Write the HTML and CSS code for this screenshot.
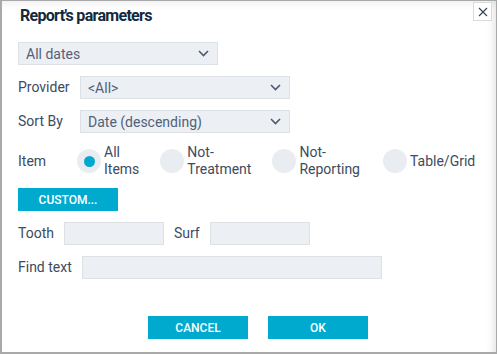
FILE: index.html
```html
<!DOCTYPE html>
<html lang="en">
<head>
  <meta charset="UTF-8" />
  <title>Report's parameters</title>
  <link rel="stylesheet" href="styles.css">
</head>
<body>

<div class="dialog">
  <div class="dialog-header">
    <div class="dialog-title">Report's parameters</div>
    <button class="close-btn" aria-label="Close">
      <svg width="10" height="10" viewBox="0 0 10 10">
        <path d="M1 1 L9 9 M9 1 L1 9" stroke="#34424f" stroke-width="1.1" fill="none"/>
      </svg>
    </button>
  </div>

  <div class="dialog-body">
    <div class="select select-dates">
      <span>All dates</span>
      <svg class="chevron" width="11" height="7" viewBox="0 0 11 7"><path d="M1 1 L5.5 5.5 L10 1" stroke="#4b5a70" stroke-width="1.6" fill="none"/></svg>
    </div>

    <div class="row">
      <span class="label label-wide">Provider</span>
      <div class="select select-long">
        <span>&lt;All&gt;</span>
        <svg class="chevron" width="11" height="7" viewBox="0 0 11 7"><path d="M1 1 L5.5 5.5 L10 1" stroke="#4b5a70" stroke-width="1.6" fill="none"/></svg>
      </div>
    </div>

    <div class="row">
      <span class="label label-wide">Sort By</span>
      <div class="select select-long">
        <span>Date (descending)</span>
        <svg class="chevron" width="11" height="7" viewBox="0 0 11 7"><path d="M1 1 L5.5 5.5 L10 1" stroke="#4b5a70" stroke-width="1.6" fill="none"/></svg>
      </div>
    </div>

    <div class="row row-radios">
      <span class="label label-item">Item</span>
      <div class="radio-group">
        <label class="radio checked"><span class="radio-circle"></span><span class="radio-text">All<br>Items</span></label>
        <label class="radio"><span class="radio-circle"></span><span class="radio-text">Not-<br>Treatment</span></label>
        <label class="radio"><span class="radio-circle"></span><span class="radio-text">Not-<br>Reporting</span></label>
        <label class="radio radio-last"><span class="radio-circle"></span><span class="radio-text">Table/Grid</span></label>
      </div>
    </div>

    <button class="btn btn-custom">CUSTOM...</button>

    <div class="row">
      <span class="label">Tooth</span>
      <input type="text" class="input input-short">
      <span class="label label-surf">Surf</span>
      <input type="text" class="input input-short">
    </div>

    <div class="row">
      <span class="label">Find text</span>
      <input type="text" class="input input-find">
    </div>

    <div class="actions">
      <button class="btn">CANCEL</button>
      <button class="btn">OK</button>
    </div>
  </div>
</div>

</body>
</html>
```

FILE: styles.css
```css
body {
  margin: 0;
  font-family: Roboto, "Liberation Sans", sans-serif;
  font-size: 14px;
  color: #3d4b5f;
}

.dialog {
  width: 497px;
  height: 354px;
  box-sizing: border-box;
  border: 1px solid #a9a9a9;
  border-left-width: 2px;
  border-bottom-width: 2px;
  background: #fff;
  box-shadow: inset -9px 0 8px -7px rgba(0, 0, 0, 0.12),
              inset 0 9px 8px -7px rgba(0, 0, 0, 0.08);
}

.dialog-header {
  display: flex;
  justify-content: space-between;
  align-items: flex-start;
  padding: 1px 4px 0 18px;
  height: 40px;
}

.dialog-title {
  font-size: 16px;
  font-weight: 700;
  letter-spacing: -0.7px;
  color: #13293d;
  margin-top: 4px;
  line-height: 20px;
}

.close-btn {
  width: 19px;
  height: 19px;
  padding: 0;
  border: 1px solid #d9dcdf;
  background: #fff;
  display: flex;
  align-items: center;
  justify-content: center;
}

.dialog-body {
  padding: 0 0 0 16px;
  display: flex;
  flex-direction: column;
  align-items: flex-start;
}

.row {
  display: flex;
  align-items: center;
  margin-top: 11px;
}

.label {
  margin-right: 10px;
  line-height: 17px;
}

.label-wide {
  width: 62px;
  margin-right: 0;
}

.label-item {
  width: 59px;
  margin-right: 0;
}

.label-surf {
  margin-left: 10px;
}

.select {
  display: flex;
  align-items: center;
  justify-content: space-between;
  box-sizing: border-box;
  height: 23px;
  padding: 0 8px 0 7px;
  background: #eceff3;
  border: 1px solid #dde1e6;
  color: #52617a;
}

.select-dates {
  width: 200px;
}

.select-long {
  width: 210px;
}

.input {
  box-sizing: border-box;
  height: 23px;
  background: #eceff3;
  border: 1px solid #dde1e6;
  margin: 0;
  padding: 0 6px;
  font: inherit;
}

.input-short {
  width: 100px;
}

.input-find {
  width: 300px;
}

.row-radios {
  margin-top: 11px;
}

.radio-group {
  display: flex;
  align-items: center;
  gap: 21px;
}

.radio {
  display: flex;
  align-items: center;
  gap: 3px;
}

.radio-last {
  margin-left: 2px;
}

.radio-circle {
  width: 24px;
  height: 24px;
  border-radius: 50%;
  background: #e9edf1;
  display: flex;
  align-items: center;
  justify-content: center;
}

.radio.checked .radio-circle::after {
  content: "";
  width: 11px;
  height: 11px;
  border-radius: 50%;
  background: #00a9cf;
}

.radio-text {
  line-height: 17px;
}

.btn {
  width: 100px;
  height: 23px;
  border: none;
  padding: 0;
  background: #00aacf;
  color: #fff;
  font-family: Roboto, "Liberation Sans", sans-serif;
  font-size: 12px;
  font-weight: 500;
}

.btn-custom {
  margin-top: 10px;
}

.actions {
  display: flex;
  gap: 20px;
  margin-top: 37px;
  margin-left: 130px;
}
```
